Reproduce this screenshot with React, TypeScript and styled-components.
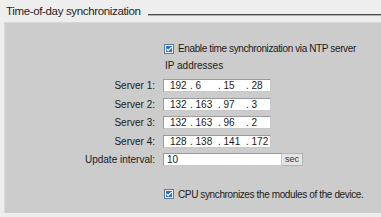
import React from "react";
import styled, { createGlobalStyle } from "styled-components";

const Global = createGlobalStyle`
  html, body { margin: 0; padding: 0; background: #eeeeee; }
  body { width: 381px; height: 217px; overflow: hidden; font-family: "Liberation Sans", Arial, sans-serif; }
`;

const Page = styled.div`
  width: 381px;
  height: 217px;
  background: #eeeeee;
  padding-top: 2px;
  box-sizing: border-box;
`;

const Header = styled.div`
  display: flex;
  align-items: flex-start;
  height: 20px;
  padding-left: 6px;
`;

const Title = styled.span`
  margin-top: 3px;
  font-size: 11.5px;
  letter-spacing: -0.35px;
  color: #1e1e1e;
  line-height: 13px;
  white-space: nowrap;
`;

const TitleRule = styled.div`
  flex: 1;
  margin-left: 7px;
  margin-top: 12px;
  height: 0;
  border-top: 1px solid #4a4a4a;
  border-bottom: 1px solid #b0b0b0;
`;

const Panel = styled.div`
  margin-left: 4px;
  height: 191px;
  background: #cccccc;
  border-left: 1px solid #d8d8d8;
  border-top: 1px solid #d8d8d8;
  box-sizing: border-box;
  padding-top: 19px;
`;

const Form = styled.div`
  display: grid;
  grid-template-columns: 150px auto;
  column-gap: 8px;
  align-items: center;
  font-size: 10px;
  color: #1a1a1a;
`;

const CheckRow = styled.label<{ $top?: number }>`
  grid-column: 2;
  display: flex;
  align-items: center;
  gap: 4px;
  height: 13px;
  margin-left: 1px;
  margin-top: ${(p) => p.$top ?? 0}px;
  white-space: nowrap;
  letter-spacing: -0.38px;
`;

const SubHead = styled.div`
  grid-column: 2;
  margin-left: 2px;
  margin-top: 4px;
  margin-bottom: 7px;
  height: 13px;
  line-height: 13px;
`;

const Label = styled.div`
  grid-column: 1;
  text-align: right;
  height: 13px;
  line-height: 13px;
  white-space: nowrap;
`;

const Field = styled.div<{ $w: number }>`
  grid-column: 2;
  display: flex;
  height: 13px;
  width: ${(p) => p.$w}px;
  box-sizing: border-box;
  background: #ffffff;
  border: 1px solid #9a9a9a;
  border-right-color: #c8c8c8;
  border-bottom-color: #c8c8c8;
  align-items: center;
  line-height: 11px;
  padding-left: 6px;
  overflow: hidden;
`;

const Octet = styled.span<{ $first?: boolean }>`
  flex: none;
  width: ${(p) => (p.$first ? 20 : 28)}px;
  white-space: pre;
  font-size: 10px;
`;

const Spacer = styled.div`
  grid-column: 1 / span 2;
  height: 5.5px;
`;

const IntervalWrap = styled.div`
  grid-column: 2;
  display: flex;
  height: 13px;
`;

const IntervalInput = styled(Field)`
  padding-left: 3px;
`;

const Unit = styled.div`
  width: 21px;
  height: 13px;
  box-sizing: border-box;
  background: #e4e4e4;
  border: 1px solid #b4b4b4;
  border-left: none;
  font-size: 9px;
  line-height: 11px;
  text-align: center;
  color: #333;
`;

const Box = styled.svg`
  flex: none;
`;

function Check() {
  return (
    <Box width="10" height="10" viewBox="0 0 10 10">
      <rect x="0.5" y="0.5" width="9" height="9" fill="#eef2f8" stroke="#5f7896" />
      <rect x="2" y="2" width="6" height="6" fill="#2f6fc7" />
      <path d="M2.6 5 L4.2 6.6 L7.6 3.1" fill="none" stroke="#ffffff" strokeWidth="1.3" />
    </Box>
  );
}

const servers = [
  ["192", "6", "15", "28"],
  ["132", "163", "97", "3"],
  ["132", "163", "96", "2"],
  ["128", "138", "141", "172"],
];

export default function App() {
  return (
    <>
      <Global />
      <Page>
        <Header>
          <Title>Time-of-day synchronization</Title>
          <TitleRule />
        </Header>
        <Panel>
          <Form>
            <CheckRow>
              <Check />
              <span>Enable time synchronization via NTP server</span>
            </CheckRow>
            <SubHead>IP addresses</SubHead>
            {servers.map((s, i) => (
              <React.Fragment key={i}>
                {i > 0 && <Spacer />}
                <Label>Server {i + 1}:</Label>
                <Field $w={108}>
                  {s.map((o, j) => (
                    <Octet key={j} $first={j === 0}>
                      {(j > 0 ? ". " : "") + o}
                    </Octet>
                  ))}
                </Field>
              </React.Fragment>
            ))}
            <Spacer />
            <Label>Update interval:</Label>
            <IntervalWrap>
              <IntervalInput $w={119}>10</IntervalInput>
              <Unit>sec</Unit>
            </IntervalWrap>
            <CheckRow $top={21.5}>
              <Check />
              <span>CPU synchronizes the modules of the device.</span>
            </CheckRow>
          </Form>
        </Panel>
      </Page>
    </>
  );
}
